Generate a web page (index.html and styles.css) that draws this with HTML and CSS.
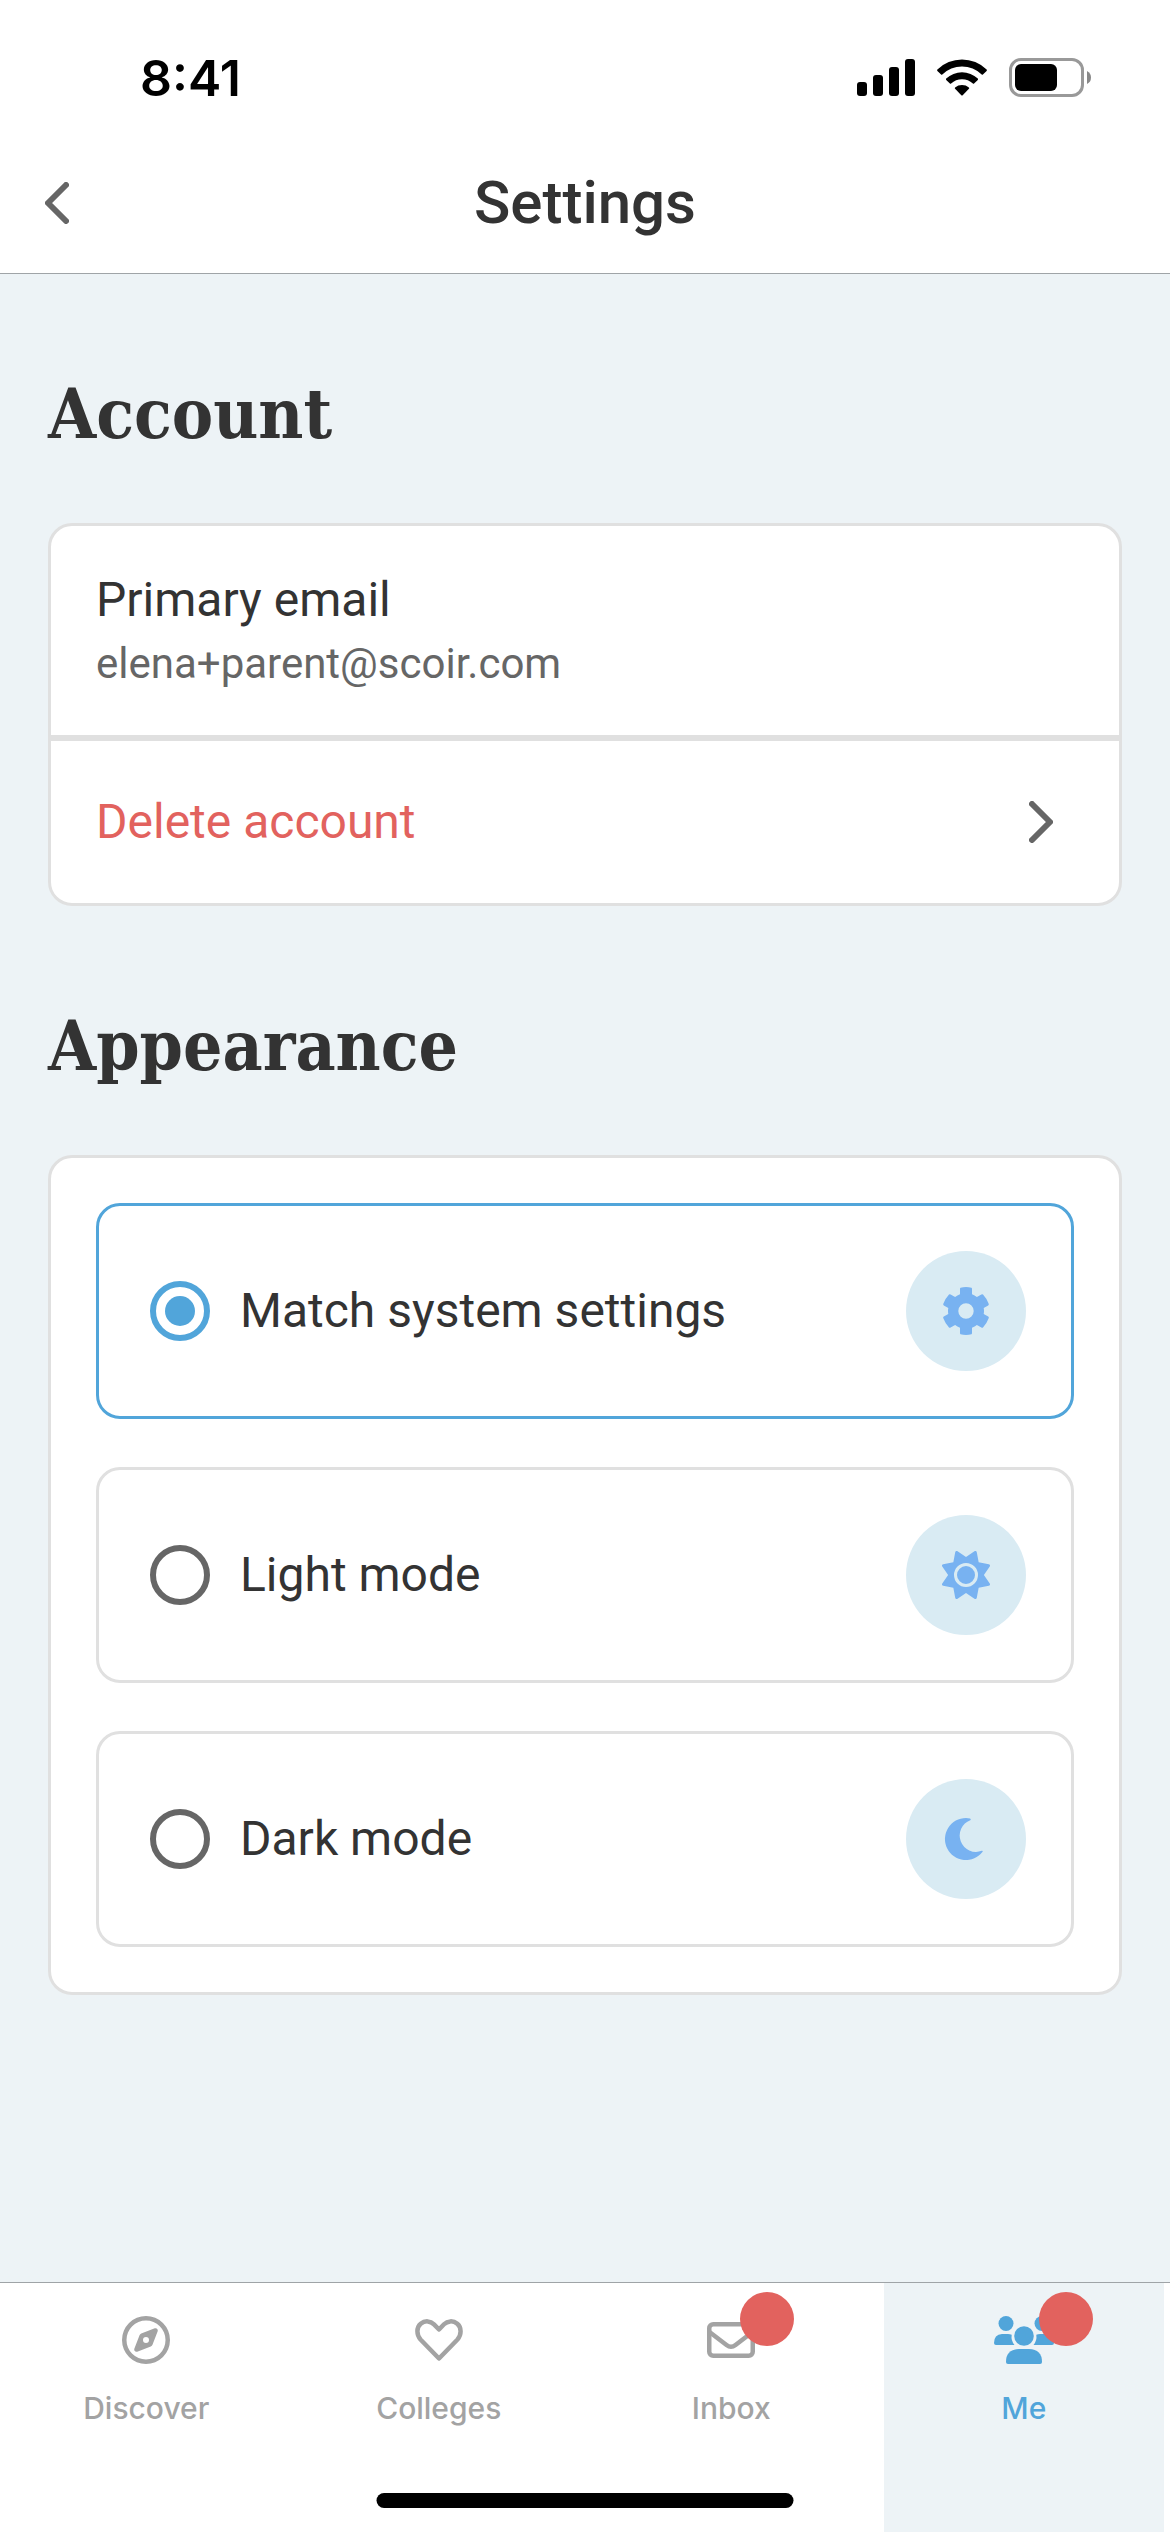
FILE: index.html
```html
<!DOCTYPE html>
<html lang="en">
<head>
  <meta charset="utf-8">
  <meta name="viewport" content="width=device-width, initial-scale=1">
  <title>Settings</title>
  <link rel="stylesheet" href="styles.css">
</head>
<body>
  <div class="status-bar">
    <span class="time">8:41</span>
    <div class="status-icons">
      <svg class="signal" viewBox="0 0 58 37">
        <rect x="0" y="23" width="10" height="14" rx="3"/>
        <rect x="16" y="16" width="10" height="21" rx="3"/>
        <rect x="32" y="8" width="10" height="29" rx="3"/>
        <rect x="48" y="0" width="10" height="37" rx="3"/>
      </svg>
      <svg class="wifi" viewBox="0 0 50 37">
        <path d="M0.4 10.6A35 35 0 0 1 49.6 10.6Q50.2 11.3 49.6 12L45.9 15.6Q45.3 16 44.7 15.5A28 28 0 0 0 5.3 15.5Q4.7 16 4.1 15.6L0.4 12Q-0.2 11.3 0.4 10.6Z"/>
        <path d="M9.2 19.6A23 23 0 0 1 40.8 19.6Q41.4 20.2 40.8 20.9L37.1 24.5Q36.5 25 35.9 24.5A16 16 0 0 0 14.1 24.5Q13.5 25 12.9 24.5L9.2 20.9Q8.6 20.2 9.2 19.6Z"/>
        <path d="M18.1 28.4A11 11 0 0 1 31.9 28.4Q32.6 29 31.9 29.8L25.7 36.2Q25 36.8 24.3 36.2L18.1 29.8Q17.4 29 18.1 28.4Z"/>
      </svg>
      <svg class="battery" viewBox="0 0 82 39">
        <rect x="1.5" y="1.5" width="72" height="36" rx="10.5" fill="none" stroke="#999" stroke-width="3"/>
        <rect x="6" y="6" width="42" height="27" rx="6"/>
        <path d="M78 13Q82 15 82 19.5Q82 24 78 26Z" fill="#888"/>
      </svg>
    </div>
  </div>

  <header class="header">
    <button class="back" aria-label="Back">
      <svg class="chevron" viewBox="0 0 24 42"><path d="M21 3L3 21L21 39"/></svg>
    </button>
    <h1>Settings</h1>
  </header>

  <main>
    <!-- Account -->
    <h2>Account</h2>
    <section class="card">
      <div class="row">
        <div class="row-title">Primary email</div>
        <div class="row-detail">elena+parent@scoir.com</div>
      </div>
      <button class="row-button">
        Delete account
        <svg class="chevron" viewBox="0 0 24 42"><path d="M3 3L21 21L3 39"/></svg>
      </button>
    </section>

    <!-- Appearance -->
    <h2>Appearance</h2>
    <section class="card options">
      <label class="option">
        <input type="radio" name="appearance" value="system" checked>
        <span class="option-label">Match system settings</span>
        <span class="option-icon">
          <svg viewBox="0 0 48 48">
            <path fill-rule="evenodd" d="M18.5 0.7Q24 -0.5 29.5 0.7Q30 1 30 2V7.2Q32.7 8.2 34.9 10L39.4 7.5Q40.4 7 41 7.6Q44.9 11.8 46.8 17Q47 17.900 46.2 18.4L41.7 21Q42.3 24 41.7 27L46.2 29.6Q47 30.1 46.8 31Q44.9 36.2 41 40.4Q40.4 41 39.4 40.5L34.9 38Q32.7 39.8 30 40.8V46Q30 47 29.5 47.3Q24 48.5 18.5 47.3Q18 47 18 46V40.8Q15.3 39.8 13.1 38L8.6 40.5Q7.6 41 7 40.4Q3.1 36.2 1.2 31Q1 30.1 1.8 29.6L6.3 27Q5.7 24 6.3 21L1.8 18.4Q1 17.9 1.2 17Q3.1 11.8 7 7.6Q7.6 7 8.6 7.5L13.1 10Q15.3 8.2 18 7.2V2Q18 1 18.5 0.7ZM31.7 24A7.7 7.7 0 1 0 16.3 24A7.7 7.7 0 1 0 31.7 24Z"/>
          </svg>
        </span>
      </label>
      <label class="option">
        <input type="radio" name="appearance" value="light">
        <span class="option-label">Light mode</span>
        <span class="option-icon">
          <svg viewBox="0 0 512 512">
            <path fill-rule="evenodd" d="M361.5 1.2c5 2.1 8.6 6.6 9.6 11.9L391 121l107.9 19.8c5.3 1 9.8 4.6 11.9 9.6s1.5 10.7-1.6 15.2L446.9 256l62.3 90.3c3.1 4.5 3.7 10.2 1.6 15.2s-6.6 8.6-11.9 9.6L391 391 371.1 498.9c-1 5.3-4.6 9.8-9.6 11.9s-10.7 1.5-15.2-1.6L256 446.9l-90.3 62.3c-4.5 3.1-10.2 3.7-15.2 1.6s-8.6-6.6-9.6-11.9L121 391 13.1 371.1c-5.3-1-9.8-4.6-11.9-9.6s-1.5-10.7 1.6-15.2L65.1 256 2.8 165.7c-3.1-4.5-3.7-10.2-1.6-15.2s6.6-8.6 11.9-9.6L121 121 140.9 13.1c1-5.3 4.6-9.8 9.6-11.9s10.7-1.5 15.2 1.6L256 65.1 346.3 2.8c4.5-3.1 10.2-3.7 15.2-1.6zM160 256a96 96 0 1 1 192 0 96 96 0 1 1 -192 0zm224 0a128 128 0 1 0 -256 0 128 128 0 1 0 256 0z"/>
          </svg>
        </span>
      </label>
      <label class="option">
        <input type="radio" name="appearance" value="dark">
        <span class="option-label">Dark mode</span>
        <span class="option-icon">
          <svg viewBox="0 0 48 48">
            <path d="M24 3A21 21 0 1 0 40.6 36.8Q41.2 35.5 39.8 35.8A16.3 16.3 0 0 1 28.3 5.2Q29.4 4 28 3.4Q26 3 24 3Z"/>
          </svg>
        </span>
      </label>
    </section>
  </main>

  <nav class="tab-bar">
    <a class="tab" href="#discover">
      <span class="tab-icon">
        <svg viewBox="0 0 512 512">
          <path d="M464 256A208 208 0 1 0 48 256a208 208 0 1 0 416 0zM0 256a256 256 0 1 1 512 0A256 256 0 1 1 0 256zm306.7 69.1L162.4 380.6c-19.4 7.5-38.5-11.6-31-31l55.5-144.3c3.3-8.5 9.9-15.1 18.4-18.4l144.3-55.5c19.4-7.5 38.5 11.6 31 31L325.1 306.7c-3.2 8.5-9.9 15.1-18.4 18.4zM288 256a32 32 0 1 0 -64 0 32 32 0 1 0 64 0z"/>
        </svg>
      </span>
      Discover
    </a>
    <a class="tab" href="#colleges">
      <span class="tab-icon">
        <svg class="outline" viewBox="0 0 48 48">
          <path d="M24 42.5L5.5 23.5C1.5 19 1.2 11.5 5.7 7.8C10 4.2 15.5 4.8 19 8.3L24 13.5L29 8.3C32.5 4.8 38 4.2 42.3 7.8C46.8 11.5 46.5 19 42.5 23.5Z"/>
        </svg>
      </span>
      Colleges
    </a>
    <a class="tab" href="#inbox">
      <span class="tab-icon">
        <svg class="outline" viewBox="0 0 48 48">
          <rect x="2.25" y="8.25" width="43.5" height="31.5" rx="4"/>
          <path d="M2.5 16L19.5 29Q24 32.5 28.5 29L45.5 16"/>
        </svg>
        <span class="badge"></span>
      </span>
      Inbox
    </a>
    <a class="tab active" href="#me">
      <span class="tab-icon">
        <svg class="wide" viewBox="0 0 60 48">
          <circle cx="12" cy="7.5" r="7.5"/>
          <circle cx="48" cy="7.5" r="7.5"/>
          <circle cx="30" cy="20" r="9.8"/>
          <path d="M8 18H14Q16 18 17.7 18.8Q16.8 24.5 20.5 29H2Q0 29 0 27Q0 18.5 8 18Z"/>
          <path d="M52 18H46Q44 18 42.3 18.8Q43.2 24.5 39.5 29H58Q60 29 60 27Q60 18.5 52 18Z"/>
          <path d="M25 33H35Q48 33.5 48 46Q48 48 46 48H14Q12 48 12 46Q12 33.5 25 33Z"/>
        </svg>
        <span class="badge"></span>
      </span>
      Me
    </a>
    <div class="home-indicator"></div>
  </nav>
</body>
</html>
```
FILE: styles.css
```css
* {
  box-sizing: border-box;
}

body {
  margin: 0;
  min-height: 100vh;
  display: flex;
  flex-direction: column;
  font-family: Roboto, sans-serif;
  background-color: #edf3f6;
  color: #333;
}

svg {
  display: block;
}

button {
  border: none;
  background: none;
  font-family: inherit;
  cursor: pointer;
}

/* Status bar */
.status-bar {
  display: flex;
  justify-content: space-between;
  align-items: center;
  height: 141px;
  padding: 14px 79px 0 140px;
  background-color: #fff;
  color: #000;
}

.time {
  font-family: Inter, sans-serif;
  font-size: 50px;
  font-weight: 600;
}

.status-icons {
  display: flex;
  align-items: center;
  gap: 22px;
}

.signal {
  width: 58px;
  height: 37px;
}

.wifi {
  width: 50px;
  height: 37px;
}

.battery {
  width: 82px;
  height: 39px;
}

/* Header */
.header {
  display: grid;
  grid-template-columns: 1fr auto 1fr;
  align-items: center;
  height: 133px;
  padding: 0 45px 8px;
  background-color: #fff;
  border-bottom: 1px solid #9fa4a7;
}

.header h1 {
  margin: 0;
  font-size: 60px;
  line-height: 72px;
  font-weight: 500;
}

.back {
  justify-self: start;
  padding: 0;
}

.chevron {
  width: 24px;
  height: 42px;
  fill: none;
  stroke: #666;
  stroke-width: 6;
  stroke-linecap: round;
  stroke-linejoin: round;
}

/* Content */
main {
  flex: 1;
  padding: 0 48px;
}

h2 {
  margin: 98px 0 67px;
  font-family: "Roboto Slab", "DejaVu Serif Condensed", "DejaVu Serif", serif;
  font-size: 69px;
  line-height: 84px;
  font-weight: bold;
}

.card {
  background-color: #fff;
  border: 3px solid #e0e0e0;
  border-radius: 24px;
}

.row {
  display: grid;
  gap: 4px;
  padding: 44px 45px 41px;
}

.row-title {
  font-size: 48px;
  line-height: 60px;
}

.row-detail {
  font-size: 42px;
  line-height: 60px;
  color: #666;
}

.row-button {
  display: flex;
  justify-content: space-between;
  align-items: center;
  width: 100%;
  padding: 51px 66px 51px 45px;
  border-top: 6px solid #e0e0e0;
  font-size: 48px;
  line-height: 60px;
  color: #e2625e;
}

/* Appearance options */
.options {
  display: grid;
  gap: 48px;
  padding: 45px;
}

.option {
  display: flex;
  align-items: center;
  gap: 30px;
  padding: 45px 45px 45px 51px;
  border: 3px solid #e0e0e0;
  border-radius: 24px;
}

.option:has(input:checked) {
  border-color: #51a5da;
}

.option input {
  appearance: none;
  width: 60px;
  height: 60px;
  margin: 0;
  border: 6px solid #666;
  border-radius: 50%;
}

.option input:checked {
  border-color: #51a5da;
  padding: 9px;
  background-color: #51a5da;
  background-clip: content-box;
}

.option-label {
  flex: 1;
  font-size: 48px;
  line-height: 60px;
}

.option-icon {
  display: flex;
  align-items: center;
  justify-content: center;
  width: 120px;
  height: 120px;
  border-radius: 50%;
  background-color: #d9ebf3;
}

.option-icon svg {
  width: 48px;
  height: 48px;
  fill: #78b2f1;
}

/* Tab bar */
.tab-bar {
  position: relative;
  display: grid;
  grid-template-columns: repeat(4, 1fr);
  background-color: #fff;
  border-top: 1px solid #9fa4a7;
}

.tab {
  display: flex;
  flex-direction: column;
  align-items: center;
  gap: 26px;
  margin: 0 6px;
  padding: 33px 0 106px;
  font-family: Inter, sans-serif;
  font-size: 30px;
  line-height: 36px;
  font-weight: 500;
  color: #a3a3a3;
  text-decoration: none;
}

.tab.active {
  background-color: #edf3f6;
  color: #51a5da;
}

.tab-icon {
  position: relative;
}

.tab-icon svg {
  width: 48px;
  height: 48px;
  fill: currentColor;
}

.tab-icon .wide {
  width: 60px;
}

.tab-icon .outline {
  fill: none;
  stroke: currentColor;
  stroke-width: 4.5;
  stroke-linejoin: round;
}

.badge {
  position: absolute;
  top: -24px;
  right: -39px;
  width: 54px;
  height: 54px;
  border-radius: 50%;
  background-color: #e2625e;
}

.home-indicator {
  position: absolute;
  bottom: 24px;
  left: 50%;
  width: 417px;
  height: 15px;
  border-radius: 8px;
  background-color: #000;
  transform: translateX(-50%);
}
```
